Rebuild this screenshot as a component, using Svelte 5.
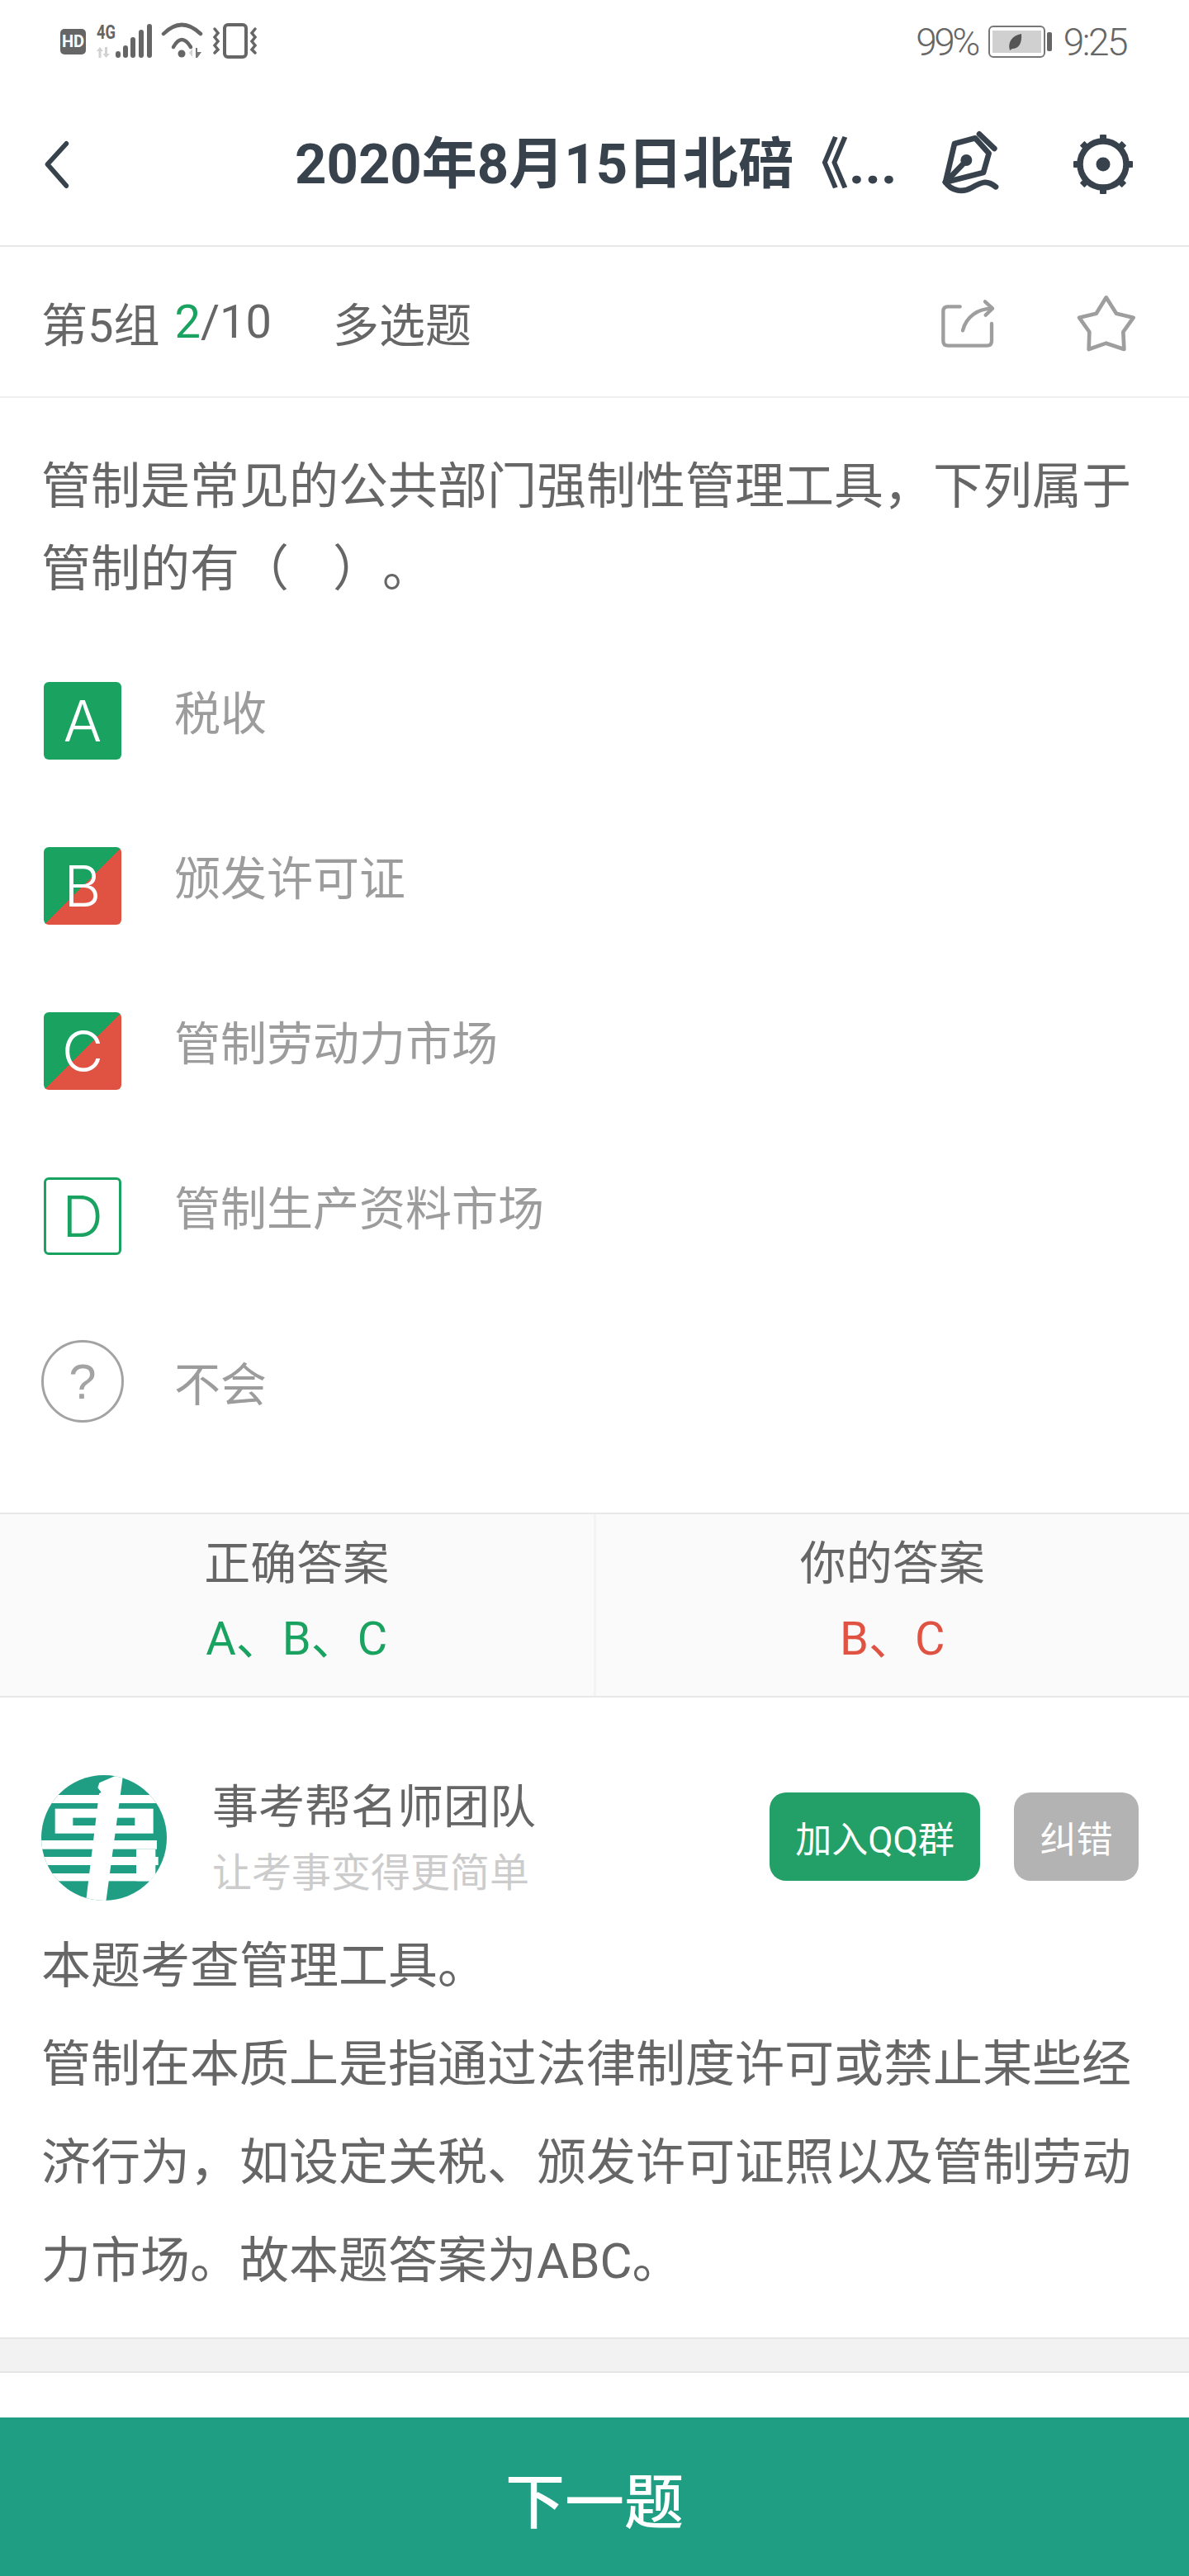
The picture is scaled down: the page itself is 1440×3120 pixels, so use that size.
<script>
  const options = [
    { k: 'A', text: '税收', cls: 'ok' },
    { k: 'B', text: '颁发许可证', cls: 'both' },
    { k: 'C', text: '管制劳动力市场', cls: 'both' },
    { k: 'D', text: '管制生产资料市场', cls: 'line' }
  ];
  const teeth = [0, 45, 90, 135, 180, 225, 270, 315];
</script>

<div class="page">
  <div class="status">
    <svg class="st-left" width="250" height="50" viewBox="70 25 250 50">
      <rect x="73" y="35" width="31" height="31" rx="5" fill="#666" />
      <text x="88.5" y="57" text-anchor="middle" class="hd">HD</text>
      <text x="117" y="47" class="fg" textLength="23" lengthAdjust="spacingAndGlyphs">4G</text>
      <g fill="#d2d2d2">
        <path d="M117 62l4-5 4 5h-2.500v8h-3v-8z" />
        <path d="M127 57h3v8h3l-4.500 5-4-5h2.500z" />
      </g>
      <g fill="#666">
        <rect x="140" y="62" width="6" height="8" rx="3" />
        <rect x="149" y="55" width="6" height="15" rx="3" />
        <rect x="158" y="45" width="6" height="25" rx="3" />
        <rect x="168" y="36" width="6" height="34" rx="3" />
        <rect x="178" y="29" width="6" height="41" rx="3" />
        <circle cx="220" cy="65" r="4.500" />
      </g>
      <g fill="none" stroke="#666" stroke-width="4.500" stroke-linecap="round">
        <path d="M198 41Q220 19 243 41" />
        <path d="M210 57Q220 39 231 57" />
        <rect x="272" y="30" width="26" height="39" rx="4" stroke-width="4" />
        <path d="M260 35l4 5-4 5 4 5-4 5 4 5-4 4" stroke-width="3.500" />
        <path d="M309 35l-4 5 4 5-4 5 4 5-4 5 4 4" stroke-width="3.500" />
      </g>
      <path d="M229 64l4-5v10z" fill="#d2d2d2" />
      <path d="M237 58h2v5h5l-5 7h-2z" fill="#777" />
    </svg>
    <div class="st-right">
      <span class="st-text pct">99%</span>
      <svg width="78" height="40" viewBox="0 0 78 40">
        <rect x="1" y="1" width="67" height="37" rx="5" fill="#fff" stroke="#777" stroke-width="2" />
        <rect x="5" y="6" width="59" height="27" fill="#d0d0d0" />
        <path d="M26 30c-3-10 3-18 14-20 1 11-3 18-11 18l-3 2z" fill="#555" />
        <rect x="71" y="8" width="6" height="23" rx="2" fill="#666" />
      </svg>
      <span class="st-text time">9:25</span>
    </div>
  </div>

  <header class="bar">
    <svg class="back" width="40" height="60" viewBox="0 0 40 60">
      <path d="M34 5L10 30l24 26" fill="none" stroke="#37424d" stroke-width="6" stroke-linecap="round" stroke-linejoin="round" transform="translate(-2 0) scale(.95 1)" />
    </svg>
    <h1>2020年8月15日北碚《...</h1>
    <div class="bar-icons">
      <svg width="80" height="90" viewBox="165 45 240 270">
        <g fill="none" stroke="#37424d" stroke-width="20" stroke-linecap="round" stroke-linejoin="round">
          <path d="M192 245L225 105l75-20 50 55-20 70z" />
          <path d="M192 245l70-72" />
          <path d="M315 70l55 53" />
          <path d="M192 245c20 30 60 40 95 20s55-30 88-3" />
        </g>
        <circle cx="268" cy="165" r="21" fill="#37424d" />
      </svg>
      <svg width="80" height="80" viewBox="-40 -40 80 80">
        <circle r="28" fill="none" stroke="#37424d" stroke-width="7.500" />
        <circle r="8.500" fill="#37424d" />
        {#each teeth as t}
          <rect x="-4" y="-36" width="8" height="10" rx="1" fill="#37424d" transform="rotate({t})" />
        {/each}
      </svg>
    </div>
  </header>

  <div class="sub">
    <span>第5组</span>
    <span class="count"><b>2</b>/10</span>
    <span class="type">多选题</span>
    <div class="sub-icons">
      <svg width="80" height="75" viewBox="30 30 240 225">
        <g fill="none" stroke="#9e9e9e" stroke-width="13" stroke-linecap="round" stroke-linejoin="round">
          <path d="M122 88H78q-17 0-17 17v108q0 17 17 17h142q17 0 17-17v-63" />
          <path d="M132 175c12-50 55-80 106-80" />
          <path d="M213 70l27 25-25 24" />
        </g>
      </svg>
      <svg width="85" height="75" viewBox="525 30 255 225">
        <path d="M653 55l37 58 62 15-37 52 3 63-65-22-63 22 2-63-37-52 62-15z" fill="none" stroke="#9e9e9e" stroke-width="14" stroke-linejoin="round" />
      </svg>
    </div>
  </div>

  <p class="question">管制是常见的公共部门强制性管理工具，下列属于管制的有（<span class="blank"></span>）。</p>

  <div class="options">
    {#each options as o}
      <div class="opt">
        <span class="box {o.cls}">{o.k}</span>
        <span class="opt-text">{o.text}</span>
      </div>
    {/each}
    <div class="opt">
      <span class="unknown">?</span>
      <span class="opt-text flat">不会</span>
    </div>
  </div>

  <div class="answers">
    <div class="ans">
      <div>正确答案</div>
      <div class="green">A、B、C</div>
    </div>
    <div class="ans">
      <div>你的答案</div>
      <div class="red">B、C</div>
    </div>
  </div>

  <section class="explain">
    <div class="teacher">
      <svg class="logo" width="152" height="152" viewBox="90 88 456 456">
        <defs>
          <clipPath id="lc"><circle cx="318" cy="316" r="228" /></clipPath>
        </defs>
        <g clip-path="url(#lc)">
          <rect x="90" y="88" width="456" height="456" fill="#1f9e84" />
          <g fill="#fff">
            <rect x="90" y="160" width="456" height="30" />
            <rect x="140" y="210" width="357" height="90" />
            <rect x="90" y="325" width="420" height="32" />
            <rect x="90" y="385" width="425" height="30" />
            <rect x="90" y="445" width="456" height="28" />
            <rect x="435" y="357" width="70" height="116" />
          </g>
          <g fill="#1f9e84">
            <rect x="205" y="243" width="95" height="28" />
            <rect x="350" y="243" width="80" height="28" />
          </g>
          <path d="M387 88L325 548H252L300 155l8-5-13-16 6-18 59-26z" fill="#fff" />
        </g>
      </svg>
      <div class="who">
        <div class="name">事考帮名师团队</div>
        <div class="slogan">让考事变得更简单</div>
      </div>
      <div class="btns">
        <span class="btn join">加入QQ群</span>
        <span class="btn fix">纠错</span>
      </div>
    </div>
    <p class="text">本题考查管理工具。<br />管制在本质上是指通过法律制度许可或禁止某些经济行为，如设定关税、颁发许可证照以及管制劳动力市场。故本题答案为ABC。</p>
  </section>

  <div class="gap"></div>
  <div class="next">下一题</div>
</div>

<style>
  :global(body) { margin: 0; background: #fff; }
  .page {
    width: 1440px;
    height: 3120px;
    overflow: hidden;
    display: flex;
    flex-direction: column;
    font-family: Roboto, "Noto Sans CJK SC", sans-serif;
    color: #666;
    background: #fff;
    text-spacing-trim: space-all;
  }
  .status {
    height: 100px;
    flex: none;
    display: flex;
    align-items: center;
    justify-content: space-between;
    padding: 0 76px 0 70px;
  }
  .hd { font: 700 20px Roboto, sans-serif; fill: #fff; }
  .fg { font: 700 24px Roboto, sans-serif; fill: #666; }
  .st-right { display: flex; align-items: center; gap: 13px; margin-top: 2px; }
  .st-text {
    font-family: Roboto, sans-serif;
    font-weight: 300;
    font-size: 46px;
    color: #666;
  }
  .pct { letter-spacing: -3.500px; }
  .time { letter-spacing: -2.500px; }
  .bar {
    height: 197px;
    flex: none;
    display: flex;
    align-items: center;
    padding: 0 0 0 50px;
    border-bottom: 2px solid #e6e6e6;
  }
  .back { flex: none; }
  h1 {
    margin: 0 0 0 267px;
    font-size: 67px;
    line-height: 90px;
    font-weight: 700;
    color: #37424d;
    white-space: nowrap;
  }
  .bar-icons {
    margin-left: auto;
    margin-right: 64px;
    display: flex;
    align-items: center;
    gap: 80px;
  }
  .sub {
    height: 181px;
    flex: none;
    display: flex;
    align-items: center;
    padding-left: 50px;
    font-size: 56px;
    border-bottom: 2px solid #efefef;
  }
  .count { margin-left: 18px; }
  .count b { font-weight: 400; color: #1aa260; }
  .type { margin-left: 74px; }
  .sub-icons {
    margin-left: auto;
    margin-right: 58px;
    display: flex;
    align-items: center;
    gap: 85px;
  }
  .question {
    margin: 0;
    padding: 58px 50px 33px;
    font-size: 60px;
    line-height: 100px;
    color: #666;
  }
  .blank { display: inline-block; width: 53px; }
  .options { display: flex; flex-direction: column; flex: none; }
  .opt {
    height: 200px;
    display: flex;
    align-items: center;
    padding-left: 50px;
  }
  .box {
    flex: none;
    width: 94px;
    height: 94px;
    margin-left: 3px;
    box-sizing: border-box;
    border-radius: 6px;
    display: flex;
    align-items: center;
    justify-content: center;
    font-family: Inter, Roboto, sans-serif;
    font-size: 69px;
    font-weight: 300;
    color: #fff;
  }
  .ok { background: #1aa260; }
  .both { background: linear-gradient(135deg, #1aa260 50%, #e05241 50%); }
  .line { border: 3px solid #1aa260; color: #1aa260; }
  .opt-text {
    margin-left: 64px;
    font-size: 56px;
    color: #9c9c9c;
    transform: translateY(-14px);
  }
  .unknown {
    flex: none;
    width: 100px;
    height: 100px;
    box-sizing: border-box;
    border: 3px solid #a3a3a3;
    border-radius: 50%;
    display: flex;
    align-items: center;
    justify-content: center;
    font-family: "Liberation Sans", sans-serif;
    font-size: 60px;
    color: #a3a3a3;
  }
  .flat { margin-left: 61px; transform: translateY(-1px); }
  .answers {
    margin-top: 59px;
    height: 220px;
    flex: none;
    display: flex;
    background: #fafafa;
    border-top: 2px solid #e8e8e8;
    border-bottom: 2px solid #e8e8e8;
  }
  .ans {
    flex: 1;
    padding-top: 20px;
    text-align: center;
    font-size: 56px;
    line-height: 80px;
    color: #666;
  }
  .ans + .ans { border-left: 3px solid #f3f3f3; }
  .ans div + div { margin-top: 11px; }
  .green { color: #1aa260; }
  .red { color: #e05241; }
  .explain { padding: 94px 50px 0; flex: none; }
  .teacher { display: flex; align-items: flex-start; height: 152px; }
  .logo { flex: none; }
  .who { margin-left: 55px; }
  .name { font-size: 56px; line-height: 80px; color: #666; margin-top: -1px; }
  .slogan { font-size: 48px; line-height: 70px; color: #ccc; margin-top: 5px; }
  .btns { margin-left: auto; margin-right: 11px; margin-top: 21px; display: flex; gap: 41px; }
  .btn {
    height: 107px;
    border-radius: 20px;
    color: #fff;
    font-size: 44px;
    display: flex;
    align-items: center;
    justify-content: center;
  }
  .join { width: 255px; background: #22a067; }
  .fix { width: 151px; background: #b3b3b3; }
  .text {
    margin: 20px 0 0;
    font-size: 60px;
    line-height: 119px;
    color: #666;
  }
  .gap {
    margin-top: 33px;
    flex: none;
    background: #f2f2f2;
    border-top: 2px solid #e6e6e6;
    border-bottom: 2px solid #e6e6e6;
    box-sizing: border-box;
    height: 43px;
  }
  .next {
    margin-top: auto;
    height: 192px;
    flex: none;
    background: #1f9e84;
    color: #fff;
    font-size: 72px;
    font-weight: 500;
    display: flex;
    align-items: center;
    justify-content: center;
  }
</style>
